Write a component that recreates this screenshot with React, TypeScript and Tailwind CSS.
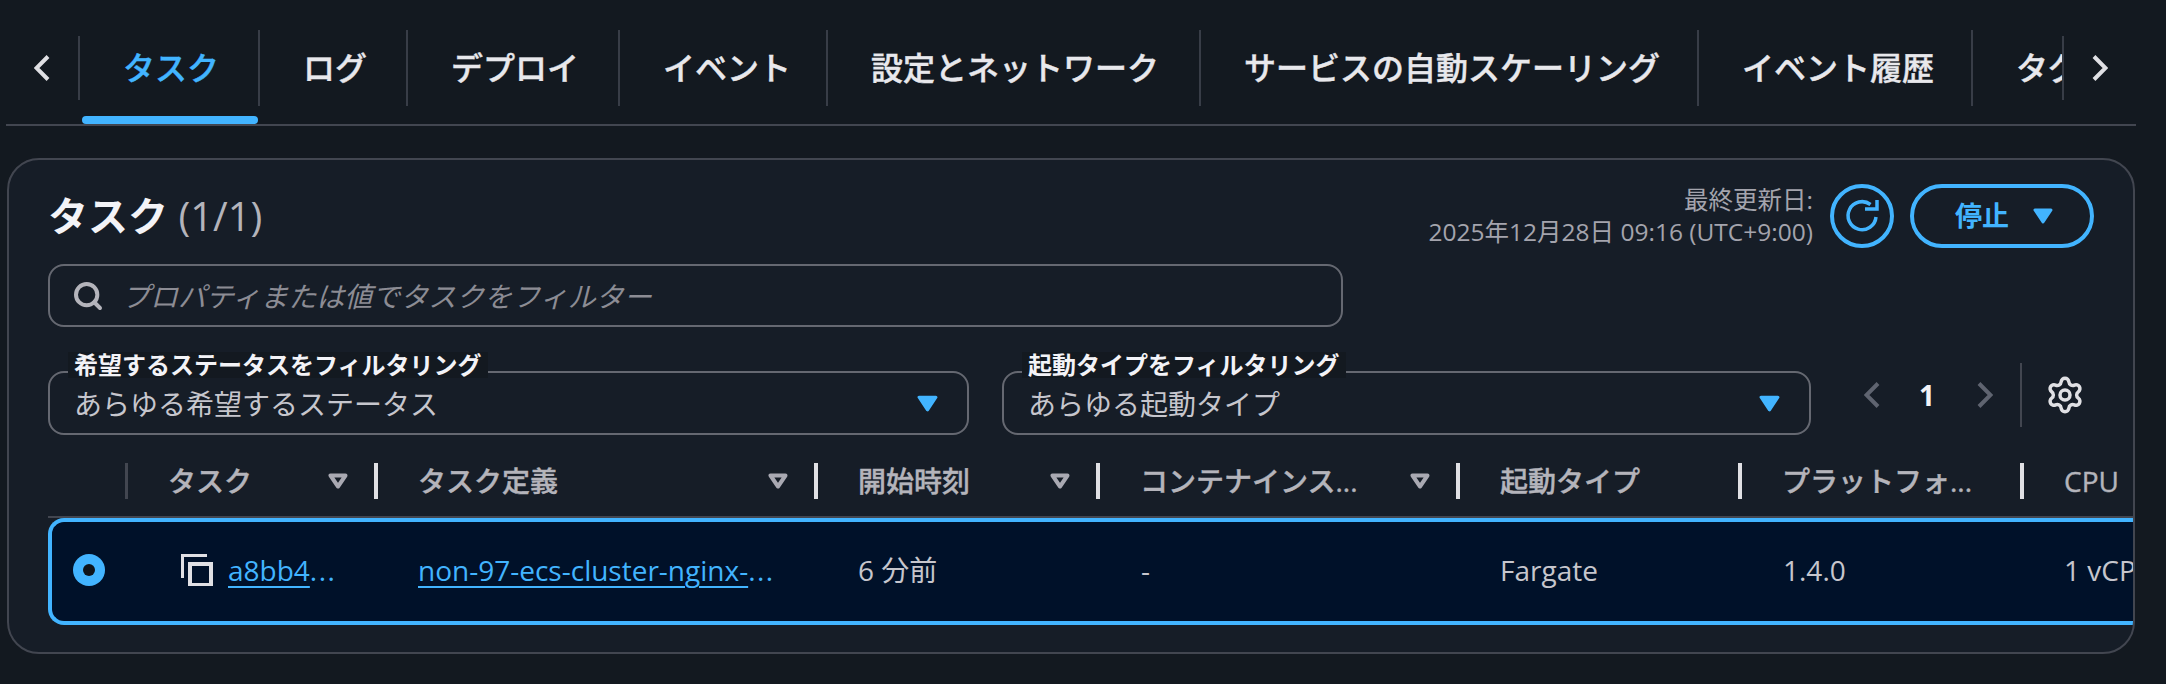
import { Search, Settings } from "lucide-react";

const tabs = [
  { label: "タスク", w: "w-[180px]", active: true },
  { label: "ログ", w: "w-[148px]" },
  { label: "デプロイ", w: "w-[212px]" },
  { label: "イベント", w: "w-[208px]" },
  { label: "設定とネットワーク", w: "w-[373px]" },
  { label: "サービスの自動スケーリング", w: "w-[498px]" },
  { label: "イベント履歴", w: "w-[274px]" },
];

const columns = [
  { label: "タスク", sort: true },
  { label: "タスク定義", sort: true },
  { label: "開始時刻", sort: true },
  { label: "コンテナインス...", sort: true },
  { label: "起動タイプ" },
  { label: "プラットフォ..." },
  { label: "CPU" },
];

function Chevron({ dir, className }: { dir: "left" | "right"; className: string }) {
  return (
    <svg viewBox="0 0 16 26" className={`h-[26px] w-[16px] shrink-0 ${className}`} fill="none" stroke="currentColor" strokeWidth="4">
      <path d={dir === "left" ? "M14 1.5 2.5 13 14 24.5" : "M2 1.5 13.5 13 2 24.5"} />
    </svg>
  );
}

function Caret({ className }: { className: string }) {
  return (
    <svg viewBox="0 0 20 16" className={className} fill="#42b4ff">
      <path d="M2 2h16l-8 12z" stroke="#42b4ff" strokeWidth="3" strokeLinejoin="round" />
    </svg>
  );
}

function SortCaret() {
  return (
    <svg viewBox="0 0 20 16" className="absolute right-[26px] top-[10px] h-[16px] w-[20px]" fill="none">
      <path d="M2.5 2.5h15L10 13.5z" stroke="#a9a9b2" strokeWidth="4" strokeLinejoin="round" />
    </svg>
  );
}

function FilterSelect({ label, value, width }: { label: string; value: string; width: string }) {
  return (
    <div className={`relative flex h-[64px] items-center justify-between rounded-[16px] border-2 border-[#656871] pl-[24px] pr-[29px] ${width}`}>
      <span className="absolute -top-[21px] left-[18px] bg-[#131920] px-[6px] text-[24px] leading-[26px] font-bold text-[#f3f3f7]">
        {label}
      </span>
      <span className="pt-[1px] text-[28px] text-[#c6c6cd]">{value}</span>
      <Caret className="h-[17px] w-[21px]" />
    </div>
  );
}

export default function App() {
  return (
    <div className="h-[684px] w-[2166px] overflow-hidden bg-[#131920] font-['Open_Sans','Noto_Sans_CJK_JP',sans-serif]">
      {/* tab strip */}
      <div className="relative ml-[6px] flex h-[126px] w-[2130px] items-start border-b-2 border-[#424650] pt-[30px]">
        <div className="mt-[6px] flex h-[64px] w-[74px] items-center justify-center border-r-2 border-[#383d47]">
          <Chevron dir="left" className="text-[#e0e0e4]" />
        </div>
        <div className="flex w-[1982px] overflow-hidden">
          {tabs.map((t) => (
            <div
              key={t.label}
              className={`flex h-[76px] shrink-0 items-center border-r-2 border-[#383d47] pl-[43px] text-[32px] font-medium [-webkit-text-stroke:0.4px_currentColor] ${t.w} ${t.active ? "text-[#42b4ff]" : "text-[#e8e8ec]"}`}
            >
              {t.label}
            </div>
          ))}
          <div className="flex h-[76px] shrink-0 items-center pl-[43px] text-[32px] font-medium text-[#e8e8ec] [-webkit-text-stroke:0.4px_currentColor]">タグ</div>
        </div>
        <div className="mt-[6px] flex h-[64px] flex-1 items-center justify-center border-l-2 border-[#383d47]">
          <Chevron dir="right" className="text-[#e0e0e4]" />
        </div>
        <div className="absolute left-[76px] top-[116px] h-[8px] w-[176px] rounded-full bg-[#42b4ff]" />
      </div>

      {/* task card */}
      <div className="ml-[7px] mt-[32px] h-[496px] w-[2128px] overflow-hidden rounded-[32px] border-2 border-[#424650] bg-[#161d27] pl-[39px] pt-[24px]">
        <div className="flex items-start justify-between pr-[39px]">
          <h2 className="pt-[6px] text-[40px] leading-[52px] font-bold text-[#f3f3f7]">
            タスク <span className="font-normal text-[#b4b4bb]">(1/1)</span>
          </h2>
          <div className="flex items-center">
            <div className="text-right text-[24.5px] leading-[32px] text-[#a4a4ad]">
              <div>最終更新日:</div>
              <div>2025年12月28日 09:16 (UTC+9:00)</div>
            </div>
            <div className="ml-[17px] flex h-[64px] w-[64px] items-center justify-center rounded-full border-4 border-[#42b4ff]">
              <svg viewBox="0 0 40 40" className="h-[40px] w-[40px]" fill="none" stroke="#42b4ff" strokeWidth="3.5">
                <path d="M34 21A14 14 0 1 1 28.5 8.5" />
                <path d="M23 13h12V4" />
              </svg>
            </div>
            <div className="ml-[16px] flex h-[64px] w-[184px] items-center rounded-full border-4 border-[#42b4ff] pl-[41px]">
              <span className="text-[27px] font-bold text-[#42b4ff]">停止</span>
              <Caret className="ml-[24px] h-[16px] w-[20px]" />
            </div>
          </div>
        </div>

        <div className="mt-[16px] flex h-[63px] w-[1295px] items-center gap-[18px] rounded-[16px] border-2 border-[#656871] pl-[22px]">
          <Search className="h-[32px] w-[32px] text-[#b4b4bb]" strokeWidth={3} />
          <span className="text-[28px] text-[#8c8c94] italic">プロパティまたは値でタスクをフィルター</span>
        </div>

        <div className="mt-[44px] flex items-start">
          <FilterSelect label="希望するステータスをフィルタリング" value="あらゆる希望するステータス" width="w-[921px]" />
          <div className="ml-[33px]">
            <FilterSelect label="起動タイプをフィルタリング" value="あらゆる起動タイプ" width="w-[809px]" />
          </div>
          <div className="ml-[53px] -mt-[8px] flex h-[64px] items-center">
            <Chevron dir="left" className="text-[#5f6470]" />
            <span className="ml-[39px] w-[16px] text-[28px] font-bold text-[#f3f3f7]">1</span>
            <Chevron dir="right" className="ml-[42px] text-[#5f6470]" />
            <div className="ml-[27px] h-[64px] w-[2px] bg-[#424650]" />
            <Settings className="ml-[23px] h-[40px] w-[40px] text-[#e0e0e4]" strokeWidth={2.1} />
          </div>
        </div>

        {/* table */}
        <div className="mt-[28px] overflow-hidden">
          <div className="grid grid-cols-[80px_250px_440px_282px_360px_282px_282px_200px] border-b-2 border-[#424650] pb-[17px]">
            <div className="h-[36px] border-r-[3px] border-[#424650]" />
            {columns.map((c, i) => (
              <div
                key={c.label}
                className={`relative h-[36px] whitespace-nowrap pl-[40px] text-[28px] leading-[36px] font-medium text-[#b4b4bb] [-webkit-text-stroke:0.4px_currentColor] ${i < 6 ? "border-r-4 border-[#e0e0e4]" : ""}`}
              >
                {c.label}
                {c.sort && <SortCaret />}
              </div>
            ))}
          </div>
          <div className="grid h-[107px] grid-cols-[76px_250px_440px_282px_360px_282px_282px_200px] items-center whitespace-nowrap rounded-l-[16px] border-y-4 border-l-4 border-[#42b4ff] bg-[#001129] pb-[3px] text-[28px] text-[#c6c6cd]">
            <div className="pl-[21px]">
              <div className="flex h-[32px] w-[32px] items-center justify-center rounded-full bg-[#42b4ff]">
                <div className="h-[12px] w-[12px] rounded-full bg-[#0f141a]" />
              </div>
            </div>
            <div className="flex items-center pl-[53px]">
              <svg viewBox="0 0 32 32" className="mr-[15px] h-[32px] w-[32px]" fill="none" stroke="#e0e0e4">
                <path d="M1.5 24V1.5H26" strokeWidth="3" />
                <path d="M9 10h21v21H9z" strokeWidth="4" />
              </svg>
              <span className="text-[#42b4ff]">
                <span className="underline decoration-2 underline-offset-[5px]">a8bb4</span>
                <span className="tracking-[1.5px]">...</span>
              </span>
            </div>
            <div className="pl-[40px] text-[#42b4ff]">
              <span className="underline decoration-2 underline-offset-[5px]">non-97-ecs-cluster-nginx-</span>
              <span className="tracking-[1.5px]">...</span>
            </div>
            <div className="pl-[40px]">6 分前</div>
            <div className="pl-[41px]">-</div>
            <div className="pl-[40px]">Fargate</div>
            <div className="pl-[41px]">1.4.0</div>
            <div className="pl-[40px]">1 vCPU</div>
          </div>
        </div>
      </div>
    </div>
  );
}
